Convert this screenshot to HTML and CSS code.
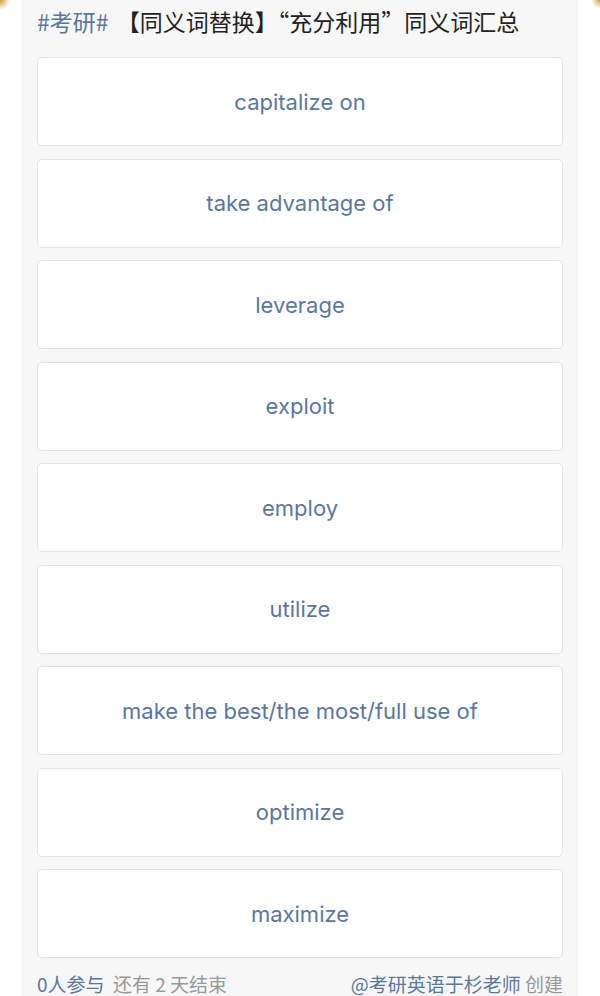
FILE: index.html
```html
<!DOCTYPE html>
<html lang="zh">
<head>
<meta charset="utf-8">
<link rel="stylesheet" href="styles.css">
</head>
<body>
<div class="corner corner-left"></div>
<div class="corner corner-right"></div>
<main class="panel">
  <h1 class="title"><span class="tag">#考研#</span> 【同义词替换】“充分利用”同义词汇总</h1>
  <ul class="options">
    <li class="option">capitalize on</li>
    <li class="option">take advantage of</li>
    <li class="option">leverage</li>
    <li class="option">exploit</li>
    <li class="option">employ</li>
    <li class="option">utilize</li>
    <li class="option">make the best/the most/full use of</li>
    <li class="option">optimize</li>
    <li class="option">maximize</li>
  </ul>
  <footer class="footer">
    <div class="left"><span class="blue">0人参与</span>&nbsp; <span class="gray">还有 2 天结束</span></div>
    <div class="right"><span class="blue">@考研英语于杉老师</span> <span class="gray">创建</span></div>
  </footer>
</main>
</body>
</html>
```

FILE: styles.css
```css
html, body {
  margin: 0;
  padding: 0;
  background: #ffffff;
}
body {
  font-family: "Inter", "Liberation Sans", "Noto Sans CJK SC", sans-serif;
  position: relative;
  width: 600px;
  height: 996px;
  overflow: hidden;
}
.corner {
  position: absolute;
  top: 0;
  width: 10px;
  height: 16px;
}
.corner-left {
  left: 0;
  background: radial-gradient(circle at 0 0, #c99a3c 0, #e9cf95 5px, rgba(255,255,255,0) 10px);
}
.corner-right {
  right: 0;
  background: radial-gradient(circle at 100% 0, #c99a3c 0, #e9cf95 4px, rgba(255,255,255,0) 9px);
}
.panel {
  margin: 0 22px 0 21px;
  background: #f7f7f7;
  padding: 5px 15px 0 16px;
  height: 991px;
}
.title {
  margin: 0 0 19px;
  font-weight: normal;
  font-size: 23px;
  line-height: 33px;
  color: #222222;
  font-family: "Noto Sans CJK SC", sans-serif;
  white-space: nowrap;
}
.tag {
  color: #5a77a0;
  margin-right: 3px;
}
.options {
  list-style: none;
  margin: 0;
  padding: 0;
  display: flex;
  flex-direction: column;
  gap: 12.5px;
}
.option {
  box-sizing: border-box;
  height: 89px;
  background: #ffffff;
  border: 1px solid #e3e3e3;
  border-radius: 5px;
  display: flex;
  align-items: center;
  justify-content: center;
  font-size: 22px;
  color: #5a77a0;
}
.footer {
  display: flex;
  justify-content: space-between;
  align-items: center;
  height: 36px;
  margin-top: 7px;
  font-family: "Noto Sans CJK SC", sans-serif;
  font-size: 19px;
}
.blue { color: #5a77a0; }
.gray { color: #999999; }
```
